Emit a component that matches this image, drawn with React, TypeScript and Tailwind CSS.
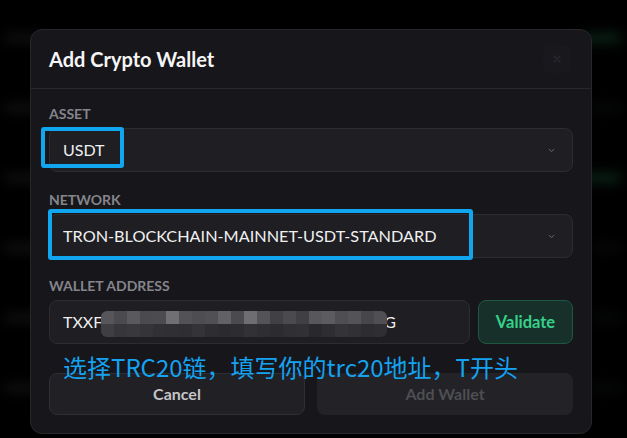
import React from "react";

const mosaicTop = ["#56565a","#4a4a4f","#5a5a5e","#4a4a4f","#4c4c50","#707074","#535357","#4d4d52","#505055","#626266","#4a4a4f","#6e6e72","#545458","#404045","#4a4a4f","#3f3f44","#58585c","#5c5c60","#4e4e53","#545458","#46464b","#4f4f54"];
const mosaicBot = ["#3e3e43","#36363b","#38383d","#343439","#303035","#2f2f34","#2e2e33","#333338","#2d2d32","#2a2a2f","#2c2c31","#313136","#2e2e33","#2b2b30","#2f2f34","#303035","#28282d","#2d2d32","#333338","#303035","#2c2c31","#2e2e33"];

function Chevron() {
  return (
    <svg width="9" height="9" viewBox="0 0 24 24" fill="none" stroke="#6f6f75" strokeWidth="2.5" strokeLinecap="round" strokeLinejoin="round">
      <path d="M6 9l6 6 6-6" />
    </svg>
  );
}

export default function App() {
  const font = { fontFamily: '"Lato", "Noto Sans", sans-serif' };
  return (
    <div className="relative h-[438px] w-[627px] overflow-hidden bg-black" style={font}>
      {/* blurred background page */}
      <div className="flex flex-col gap-[60px] pt-[33px] blur-[6px]">
        {[0, 1, 2, 3, 4, 5].map((i) => (
          <div key={i} className="flex items-center justify-between pl-[4px] pr-[6px]">
            <div className="h-[8px] w-[40px] rounded bg-[#121212]" />
            <div className={i === 0 || i === 2 ? "h-[10px] w-[40px] rounded bg-[#0a2216]" : "h-[10px] w-[30px] rounded bg-[#050806]"} />
          </div>
        ))}
      </div>

      {/* modal */}
      <div className="absolute left-[30px] top-[29px] w-[562px] rounded-[12px] border border-[#26262b] bg-[#16161b]">
        <div className="flex items-center justify-between border-b border-[#28282d] py-[18px] pl-[18px] pr-[20px]">
          <h2 className="text-[20px] font-bold leading-[22px] text-[#f5f5f5]">Add Crypto Wallet</h2>
          <div className="-my-[3px] flex h-[28px] w-[28px] items-center justify-center rounded-[6px] bg-[#18181d]">
            <svg width="12" height="12" viewBox="0 0 24 24" fill="none" stroke="#2a2a30" strokeWidth="2.5" strokeLinecap="round">
              <path d="M6 6l12 12M18 6L6 18" />
            </svg>
          </div>
        </div>

        <div className="relative flex flex-col px-[18px] pb-[18px] pt-[17px]">
          <label className="mb-[6px] h-[16px] text-[14px] font-bold leading-[16px] text-[#85858b]">ASSET</label>
          <div className="flex h-[44px] items-center justify-between rounded-[8px] border border-[#2c2c31] bg-[#1e1e23] pl-[13px] pr-[16px]">
            <span className="text-[16px] text-[#f0f0f0]">USDT</span>
            <Chevron />
          </div>

          <label className="mb-[6px] mt-[20px] h-[16px] text-[14px] font-bold leading-[16px] text-[#85858b]">NETWORK</label>
          <div className="flex h-[44px] items-center justify-between rounded-[8px] border border-[#2c2c31] bg-[#1e1e23] pl-[13px] pr-[16px]">
            <span className="text-[16.25px] text-[#f0f0f0]">TRON-BLOCKCHAIN-MAINNET-USDT-STANDARD</span>
            <Chevron />
          </div>

          <label className="mb-[6px] mt-[20px] h-[16px] text-[14px] font-bold leading-[16px] text-[#85858b]">WALLET ADDRESS</label>
          <div className="flex gap-[8px]">
            <div className="relative flex h-[44px] flex-1 items-center rounded-[8px] border border-[#2c2c31] bg-[#1e1e23] pl-[13px]">
              <span className="text-[16px] text-[#f0f0f0]">TXXF</span>
              <span className="inline-block w-[282px]" />
              <span className="text-[16px] text-[#f0f0f0]">G</span>
              <div className="absolute left-[51px] top-[10px] flex flex-col overflow-hidden rounded-[6px]">
                <div className="flex">
                  {mosaicTop.map((c, i) => (
                    <div key={i} className="h-[13px] w-[13px]" style={{ backgroundColor: c }} />
                  ))}
                </div>
                <div className="flex">
                  {mosaicBot.map((c, i) => (
                    <div key={i} className="h-[13px] w-[13px]" style={{ backgroundColor: c }} />
                  ))}
                </div>
              </div>
            </div>
            <button className="flex h-[44px] w-[95px] items-center justify-center rounded-[8px] border border-[#1f5840] bg-[#17302a] text-[16.5px] font-bold text-[#36d08b]">
              Validate
            </button>
          </div>

          <div className="mt-[29px] grid grid-cols-2 gap-[12px]">
            <button className="h-[42px] rounded-[8px] border border-[#2e2e33] bg-[#202025] text-[16px] font-bold text-[#c4c4c8]">Cancel</button>
            <button className="h-[42px] rounded-[8px] bg-[#222227] text-[16px] font-bold text-[#4e4e53]">Add Wallet</button>
          </div>

          {/* annotation overlay */}
          <div
            className="absolute left-[32px] top-[264px] whitespace-nowrap text-[24px] leading-[28px] text-[#15a2f0]"
            style={{ fontFamily: '"Noto Sans CJK SC", "Noto Sans", sans-serif' }}
          >
            选择TRC20链，填写你的trc20地址，T开头
          </div>
        </div>
      </div>

      {/* annotation highlight boxes */}
      <div className="absolute left-[41px] top-[127px] h-[41px] w-[83px] rounded-[3px] border-[4px] border-[#10a6f0]" />
      <div className="absolute left-[48px] top-[209px] h-[51px] w-[425px] rounded-[3px] border-[4px] border-[#10a6f0]" />
    </div>
  );
}
